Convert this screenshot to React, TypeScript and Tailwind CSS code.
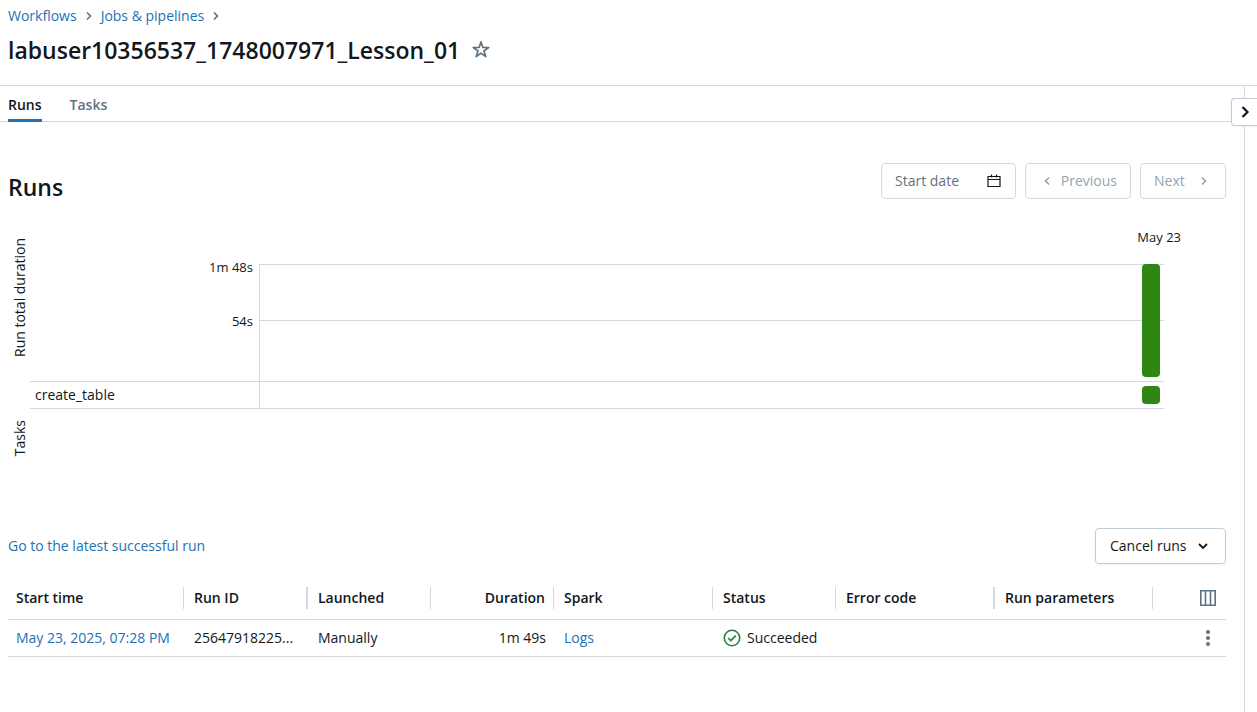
import React from "react";

type IconProps = { className?: string; size?: number };

const ChevronRight = ({ className, size = 16 }: IconProps) => (
  <svg width={size} height={size} viewBox="0 0 16 16" fill="none" stroke="currentColor" strokeWidth="1.6" className={className} aria-hidden="true">
    <path d="M6 4.5 9.5 8 6 11.5" />
  </svg>
);

const ChevronLeft = ({ className, size = 16 }: IconProps) => (
  <svg width={size} height={size} viewBox="0 0 16 16" fill="none" stroke="currentColor" strokeWidth="1.6" className={className} aria-hidden="true">
    <path d="M10 4.5 6.5 8l3.5 3.5" />
  </svg>
);

const ChevronExpand = ({ className }: IconProps) => (
  <svg width="16" height="16" viewBox="0 0 16 16" fill="none" stroke="currentColor" strokeWidth="2.2" className={className} aria-hidden="true">
    <path d="M5.5 3 10.5 8l-5 5" />
  </svg>
);

const ChevronDown = ({ className, size = 16 }: IconProps) => (
  <svg width={size} height={size} viewBox="0 0 16 16" fill="none" stroke="currentColor" strokeWidth="1.8" className={className} aria-hidden="true">
    <path d="M4 6l4 4 4-4" />
  </svg>
);

const Star = ({ className }: IconProps) => (
  <svg width="18" height="18" viewBox="0 0 16 16" fill="currentColor" className={className} aria-hidden="true">
    <path
      fillRule="evenodd"
      d="M7.995 0a.75.75 0 0 1 .714.518l1.459 4.492h4.723a.75.75 0 0 1 .44 1.356l-3.82 2.776 1.459 4.492a.75.75 0 0 1-1.154.838l-3.82-2.776-3.821 2.776a.75.75 0 0 1-1.154-.838L4.48 9.142.66 6.366A.75.75 0 0 1 1.1 5.01h4.723L7.282.518A.75.75 0 0 1 7.995 0m0 3.177-.914 2.814a.75.75 0 0 1-.713.519h-2.96l2.394 1.739a.75.75 0 0 1 .273.839l-.915 2.814 2.394-1.74a.75.75 0 0 1 .882 0l2.394 1.74-.914-2.814a.75.75 0 0 1 .272-.839l2.394-1.74H9.623a.75.75 0 0 1-.713-.518z"
    />
  </svg>
);

const Calendar = ({ className }: IconProps) => (
  <svg width="14" height="14" viewBox="0 0 14 14" fill="none" stroke="currentColor" strokeWidth="1.2" className={className} aria-hidden="true">
    <path d="M1 2.5h12v10H1zM1 5.5h12M4.5.5v3M9.5.5v3" />
  </svg>
);

const CheckCircle = ({ className }: IconProps) => (
  <svg width="18" height="18" viewBox="0 0 18 18" fill="none" stroke="currentColor" strokeWidth="1.6" className={className} aria-hidden="true">
    <circle cx="9" cy="9" r="7.7" />
    <path d="m5.2 9 2.6 2.6L12.8 6.6" />
  </svg>
);

const Columns = ({ className }: IconProps) => (
  <svg width="16" height="16" viewBox="0 0 16 16" fill="none" stroke="currentColor" strokeWidth="1.6" className={className} aria-hidden="true">
    <path d="M.8.8h14.4v14.4H.8zM5.5.8v14.4M10.5.8v14.4" />
  </svg>
);

const Overflow = ({ className }: IconProps) => (
  <svg width="16" height="16" viewBox="0 0 16 16" fill="currentColor" className={className} aria-hidden="true">
    <circle cx="8" cy="2" r="2" />
    <circle cx="8" cy="8" r="2" />
    <circle cx="8" cy="14" r="2" />
  </svg>
);

type HeadProps = { children: React.ReactNode; first?: boolean; right?: boolean; wide?: boolean };

const Head = ({ children, first, right, wide }: HeadProps) => (
  <th scope="col" className="p-0 font-semibold">
    <div
      className={`flex h-[22px] items-center border-[#d1d9e1] pr-2 ${wide ? "border-r-2" : "border-r"} ${first ? "pl-2" : "pl-2.5"} ${right ? "justify-end" : ""}`}
    >
      {children}
    </div>
  </th>
);

const disabledButton =
  "flex h-9 items-center justify-between rounded border border-[#d1d9e1] px-[13px] text-[#92a4b3]";

export default function App() {
  return (
    <div className="flex min-h-screen flex-col bg-white font-['Open_Sans','Noto_Sans',sans-serif] text-sm leading-5 text-[#11171c]">
      <header className="h-[86px] border-b border-[#d1d9e1] px-2 pt-1.5">
        <nav aria-label="Breadcrumb" className="flex items-center gap-1 text-[#2272b4]">
          <a href="#workflows">Workflows</a>
          <ChevronRight className="text-[#5f7281]" />
          <a href="#jobs">Jobs &amp; pipelines</a>
          <ChevronRight className="text-[#5f7281]" />
        </nav>
        <div className="mt-2 flex items-center gap-3">
          <h1 className="text-[23px] leading-8 font-semibold">labuser10356537_1748007971_Lesson_01</h1>
          <button aria-label="Add to favorites" className="text-[#5f7281]">
            <Star />
          </button>
        </div>
      </header>

      <div className="flex grow">
        <main className="min-w-0 grow">
          <nav aria-label="Job views" className="flex h-9 gap-7 border-b border-[#d1d9e1] px-2 font-semibold">
            <a href="#runs" aria-current="page" className="h-9 border-b-3 border-[#2272b4] pt-[9px]">
              Runs
            </a>
            <a href="#tasks" className="h-9 pt-[9px] text-[#5f7281]">
              Tasks
            </a>
          </nav>

          <div className="pt-[41px] pr-[18px] pl-2">
            <div className="flex items-start justify-between">
              <h2 className="pt-2 text-[23px] leading-8 font-semibold">Runs</h2>
              <div className="flex gap-[9px]">
                <label className="flex h-9 w-[135px] items-center justify-between rounded border border-[#d1d9e1] pr-3.5 pl-[13px]">
                  <input
                    type="text"
                    aria-label="Start date"
                    placeholder="Start date"
                    className="w-20 min-w-0 outline-none placeholder:text-[#5f7281]"
                  />
                  <Calendar />
                </label>
                <button disabled className={`${disabledButton} w-[106px]`}>
                  <ChevronLeft />
                  Previous
                </button>
                <button disabled className={`${disabledButton} w-[86px]`}>
                  Next
                  <ChevronRight />
                </button>
              </div>
            </div>

            <section aria-label="Run durations" className="mt-6 flex h-[238px]">
              <div className="flex w-[22px] flex-col items-center justify-between pl-0.5">
                <div className="flex h-[141px] items-center">
                  <span className="rotate-180 whitespace-nowrap [writing-mode:vertical-rl]">Run total duration</span>
                </div>
                <div className="flex h-[54px] items-center">
                  <span className="rotate-180 [writing-mode:vertical-rl]">Tasks</span>
                </div>
              </div>
              <div className="grow pr-[62px]">
                <div className="-mr-[17px] flex h-[37px] justify-end text-[13px]">May 23</div>
                <div className="flex h-[117px]">
                  <div className="flex w-[229px] flex-col items-end pr-1.5 text-[13px]">
                    <span className="-mt-[7px] h-[54px]">1m 48s</span>
                    <span>54s</span>
                  </div>
                  <div className="flex grow justify-end border-l border-[#d1d9e1] bg-[linear-gradient(#d1d9e1,#d1d9e1),linear-gradient(#d1d9e1,#d1d9e1)] bg-[length:100%_1px] bg-[position:0_0,0_56px] bg-no-repeat pr-1">
                    <div className="h-[113px] w-[18px] rounded bg-[#308613]" />
                  </div>
                </div>
                <div className="flex h-7 border-y border-[#d1d9e1]">
                  <div className="flex w-[229px] items-center pl-[5px]">create_table</div>
                  <div className="flex grow items-center justify-end border-l border-[#d1d9e1] pr-1">
                    <div className="size-[18px] rounded bg-[#308613]" />
                  </div>
                </div>
              </div>
            </section>

            <div className="mt-[63px] flex items-center justify-between">
              <a href="#latest" className="text-[#2272b4]">
                Go to the latest successful run
              </a>
              <button className="flex h-9 w-[131px] items-center justify-between rounded border border-[#c0cdd8] pr-3.5 pl-3.5 shadow-xs">
                Cancel runs
                <ChevronDown />
              </button>
            </div>

            <table className="mt-[13px] w-full table-fixed text-left">
              <colgroup>
                <col className="w-[176px]" />
                <col className="w-[124px]" />
                <col className="w-[123px]" />
                <col className="w-[123px]" />
                <col className="w-[159px]" />
                <col className="w-[123px]" />
                <col className="w-[159px]" />
                <col className="w-[158px]" />
                <col className="w-[73px]" />
              </colgroup>
              <thead>
                <tr className="h-[42px] border-b border-[#d1d9e1]">
                  <Head first>Start time</Head>
                  <Head wide>Run ID</Head>
                  <Head>Launched</Head>
                  <Head right>Duration</Head>
                  <Head>Spark</Head>
                  <Head>Status</Head>
                  <Head wide>Error code</Head>
                  <Head>Run parameters</Head>
                  <th className="p-0 pr-2.5">
                    <button aria-label="Select columns" className="ml-auto block text-[#5f7281]">
                      <Columns />
                    </button>
                  </th>
                </tr>
              </thead>
              <tbody>
                <tr className="h-[37px] border-b border-[#d1d9e1]">
                  <td className="pl-2 whitespace-nowrap">
                    <a href="#run" className="text-[#2272b4]">
                      May 23, 2025, 07:28 PM
                    </a>
                  </td>
                  <td className="truncate pr-3 pl-2.5">25647918225...</td>
                  <td className="pl-2.5">Manually</td>
                  <td className="pr-2 text-right">1m 49s</td>
                  <td className="pl-2.5">
                    <a href="#logs" className="text-[#2272b4]">
                      Logs
                    </a>
                  </td>
                  <td className="pl-2.5">
                    <span className="flex items-center gap-1.5">
                      <CheckCircle className="shrink-0 text-[#277c43]" />
                      Succeeded
                    </span>
                  </td>
                  <td />
                  <td />
                  <td className="pr-2.5">
                    <button aria-label="Run actions" className="ml-auto block text-[#5f7281]">
                      <Overflow />
                    </button>
                  </td>
                </tr>
              </tbody>
            </table>
          </div>
        </main>

        <aside className="w-[13px] shrink-0 border-l border-[#d1d9e1] pt-3">
          <button
            aria-label="Expand details"
            className="relative -ml-[14px] flex h-7 w-[27px] items-center justify-center rounded-l border border-r-0 border-[#c0cdd8] bg-white shadow-xs"
          >
            <ChevronExpand />
          </button>
        </aside>
      </div>
    </div>
  );
}
